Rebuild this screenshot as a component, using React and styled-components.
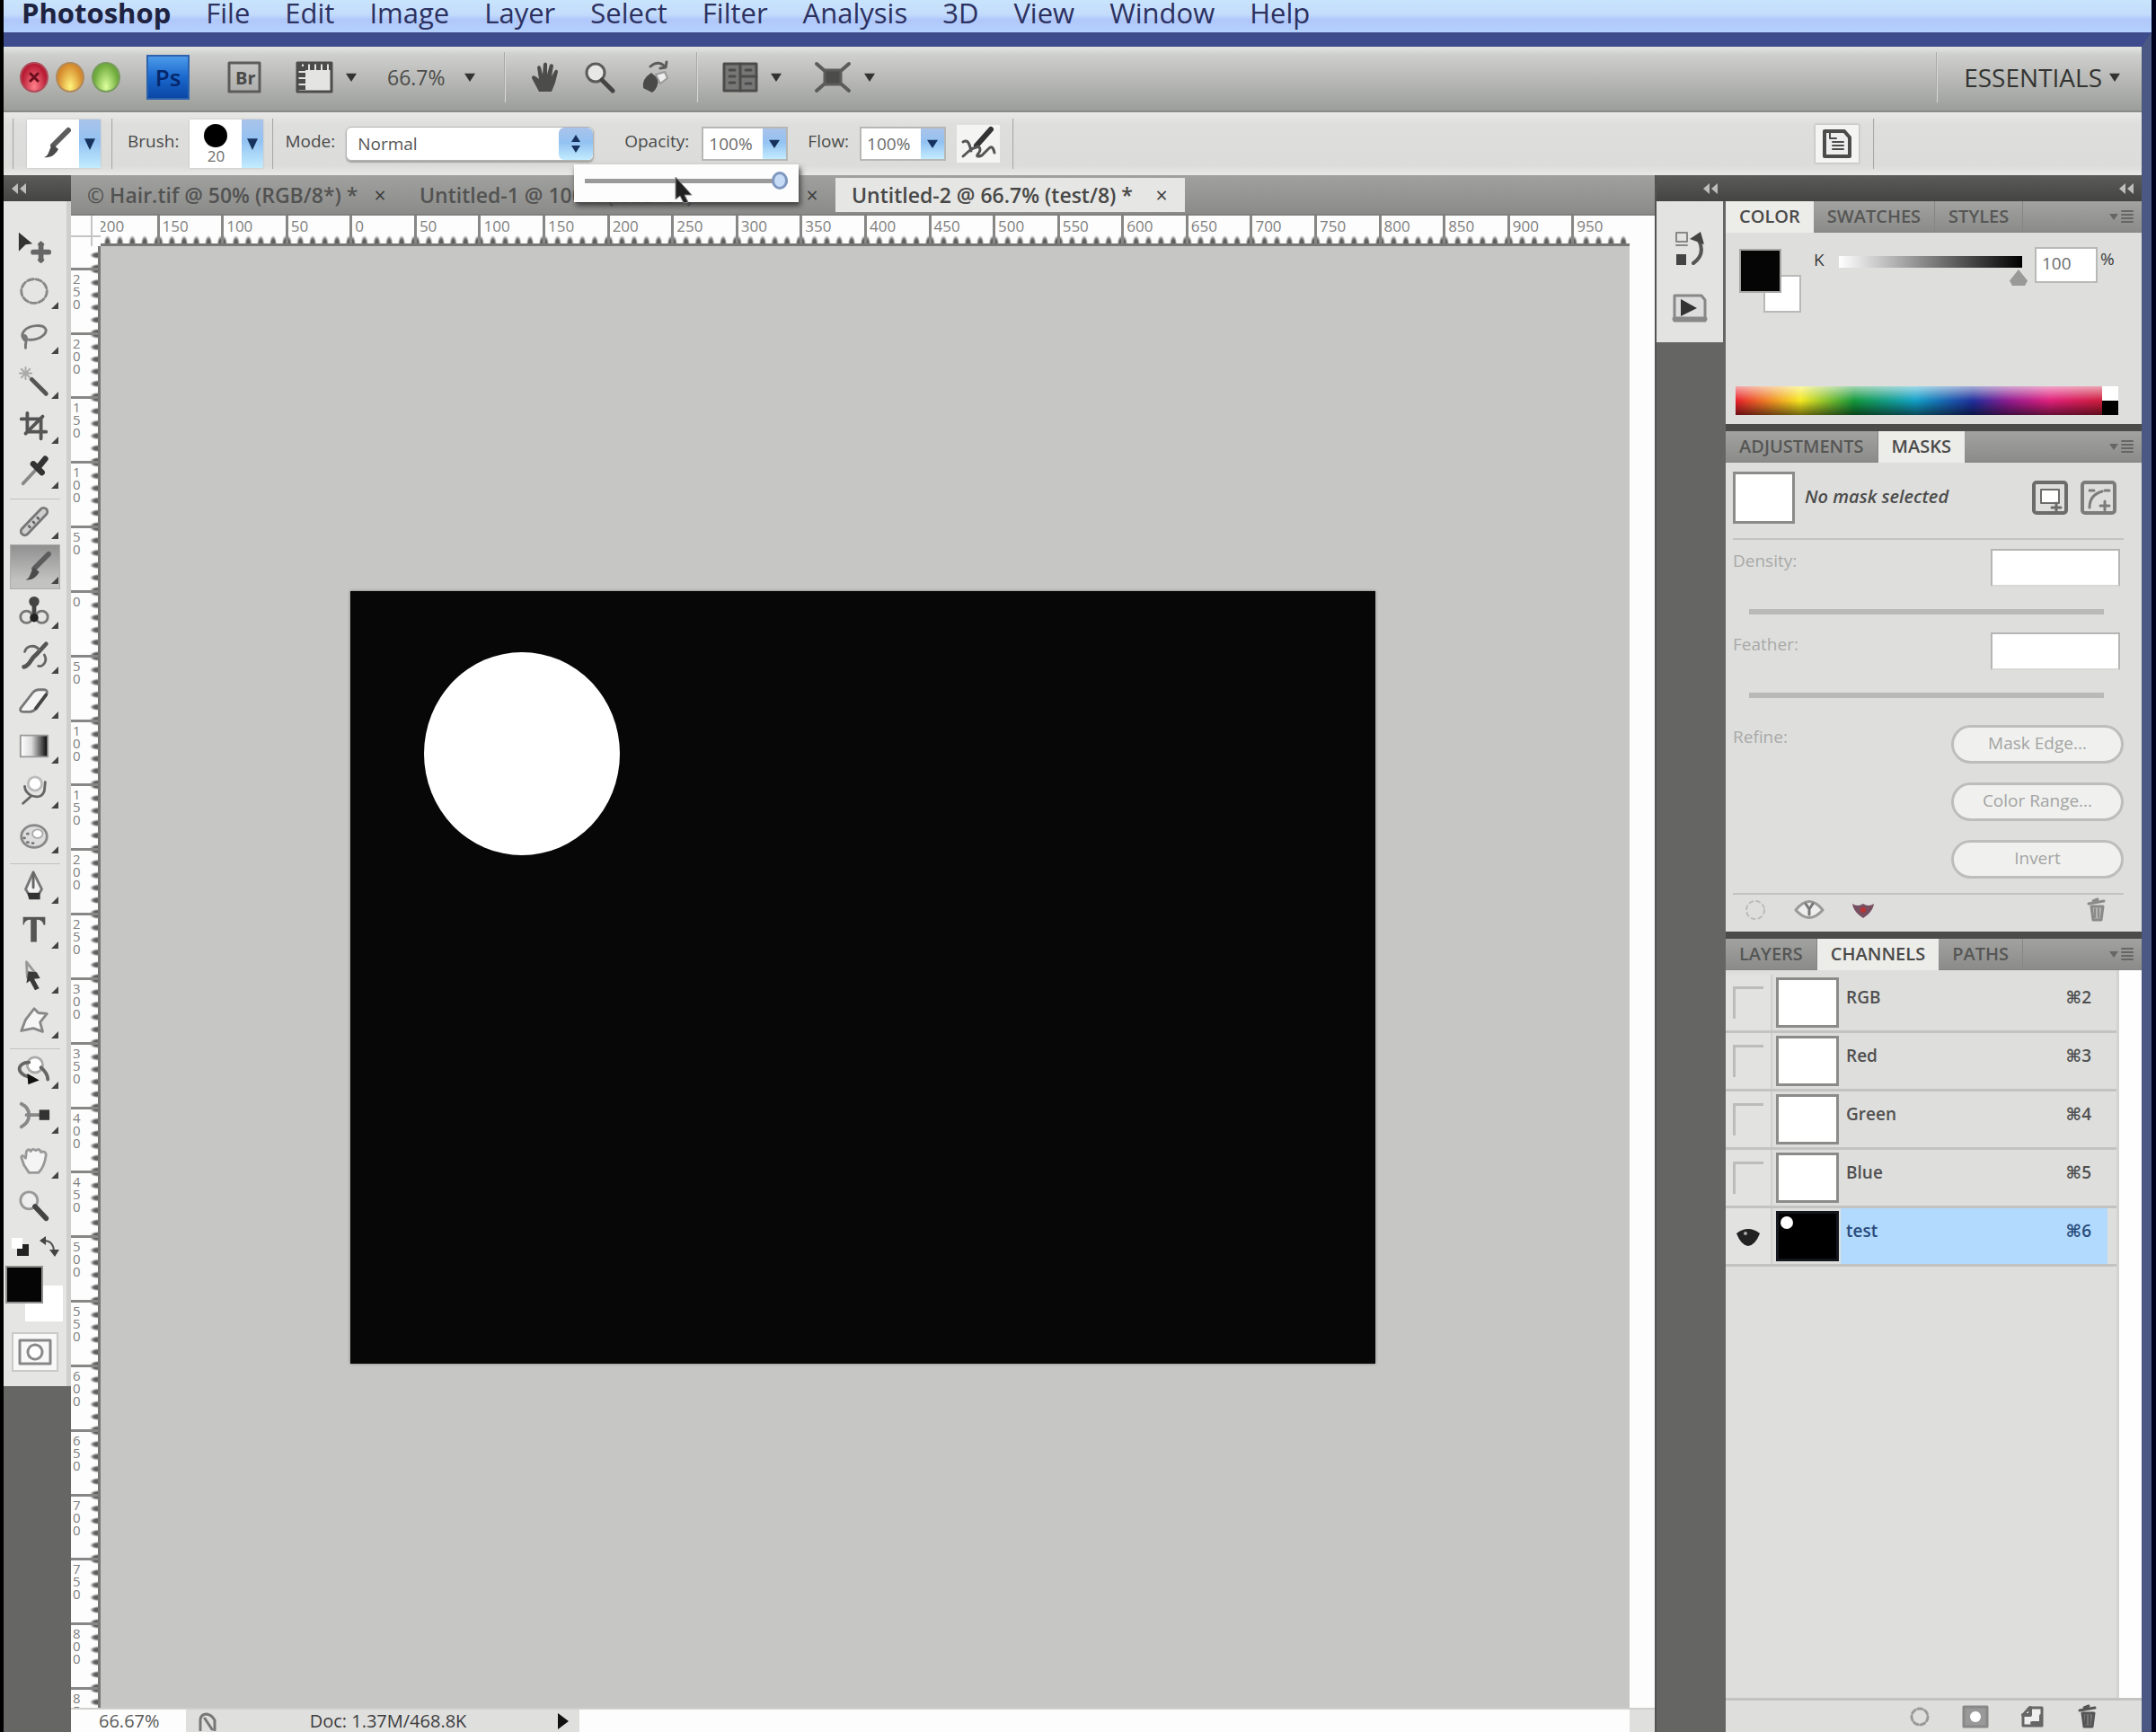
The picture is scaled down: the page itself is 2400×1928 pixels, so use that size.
import React from "react";
import styled, { createGlobalStyle, css } from "styled-components";

const GlobalStyle = createGlobalStyle`
  * { box-sizing: border-box; }
  html, body { margin: 0; background: #000; }
  body, button, input, select {
    font-family: "Open Sans", "Noto Sans", "DejaVu Sans", sans-serif;
    color: #3c3c3c;
  }
  button, input, select { border: 0; padding: 0; margin: 0; background: none; font-size: inherit; outline: none; }
  ul { list-style: none; margin: 0; padding: 0; }
`;

/* ---------- frame ---------- */
const Screen = styled.div`
  display: flex;
  flex-direction: column;
  height: 100vh;
  overflow: hidden;
  border-left: 4px solid #000;
  border-right: 5px solid #00001c;
`;
const MenuBar = styled.nav`
  display: flex;
  align-items: center;
  gap: 39px;
  flex: none;
  height: 36px;
  padding: 0 20px 8px;
  font-size: 31px;
  line-height: 28px;
  background: linear-gradient(#c8e4fc 0%, #c4dcfc 45%, #b0c8fa 60%, #b4d0fc 100%);
`;
const MenuItem = styled.button`
  color: #2c3160;
  line-height: 28px;
  font-weight: ${(p) => (p.$strong ? 700 : 500)};
  ${(p) => p.$strong && css`color: #1d2340;`}
`;
const AppWindow = styled.div`
  display: flex;
  flex-direction: column;
  flex: 1;
  min-height: 0;
  border-top: 16px solid #3e4c8e;
  border-right: 11px solid #4c5884;
`;

/* ---------- application bar ---------- */
const AppBar = styled.header`
  display: flex;
  align-items: center;
  flex: none;
  height: 73px;
  padding: 0 24px 4px 18px;
  border-bottom: 2px solid #8a8b88;
  background: linear-gradient(#e2e6e0 0%, #cfd0cd 12%, #b9bab7 50%, #9c9e9a 100%);
`;
const Lights = styled.div`
  display: flex;
  gap: 8px;
  margin-right: 29px;
`;
const Light = styled.button`
  width: 32px;
  height: 34px;
  border-radius: 50%;
  line-height: 30px;
  border: 2px solid ${(p) => p.$edge};
  background: radial-gradient(ellipse at 50% 85%, ${(p) => p.$glow} 0%, ${(p) => p.$tone} 70%);
`;
const PsLogo = styled.div`
  display: grid;
  place-items: center;
  width: 48px;
  height: 50px;
  margin-right: 42px;
  font-size: 26px;
  font-weight: 600;
  color: #06266b;
  border: 2px solid #2c62ae;
  background: linear-gradient(#4c9bea, #1a68cc 50%, #0a47a6);
`;
const BarButton = styled.button`
  display: flex;
  align-items: center;
  gap: 14px;
  margin-right: ${(p) => p.$after || 0}px;
`;
const ZoomSelect = styled.select`
  appearance: none;
  width: 86px;
  font-size: 23px;
  color: #4c4c4a;
`;
const Rule = styled.span`
  flex: none;
  width: 2px;
  height: 56px;
  margin: 0 ${(p) => p.$after || 0}px 0 ${(p) => p.$before || 0}px;
  background: #a9aaa8;
  border-right: 1px solid #d8d8d6;
`;
const Workspace = styled.button`
  display: flex;
  align-items: center;
  gap: 8px;
  font-size: 28px;
  color: #333432;
`;
const Spacer = styled.span`
  flex: 1;
`;

/* ---------- options bar ---------- */
const OptionsBar = styled.section`
  display: flex;
  align-items: center;
  flex: none;
  height: 70px;
  font-size: 19px;
  background: linear-gradient(#e8e8e7, #dededd 20%, #dcdddb 85%, #e8e8e6);
`;
const Preset = styled.button`
  display: flex;
  flex: none;
  width: 82px;
  height: 54px;
  background: #fff;
  box-shadow: 0 0 2px #b9bab8;
`;
const PresetFace = styled.span`
  display: flex;
  flex: 1;
  flex-direction: column;
  align-items: center;
  justify-content: center;
  font-size: 17px;
  line-height: 18px;
  color: #6d6d6b;
`;
const BlueCap = styled.span`
  display: flex;
  flex: none;
  align-items: center;
  justify-content: center;
  width: ${(p) => p.$w || 24}px;
  border-radius: ${(p) => p.$r || 0}px;
  background: linear-gradient(#a9c3ea, #93c2f2 45%, #c3ecff);
`;
const OptLabel = styled.label`
  margin: 0 ${(p) => p.$after || 12}px 6px ${(p) => p.$before || 16}px;
  color: #4a4a49;
`;
const ModeBox = styled.span`
  display: flex;
  width: 276px;
  height: 38px;
  border-radius: 6px;
  background: #fff;
  border: 1px solid #b3b4b2;
  box-shadow: 0 2px 2px #a2a3a1;
`;
const ModeSelect = styled.select`
  appearance: none;
  flex: 1;
  padding-left: 12px;
  color: #565656;
`;
const Combo = styled.span`
  position: relative;
  display: flex;
  width: 96px;
  height: 38px;
  background: #fff;
  border: 2px solid #b7b8b6;
`;
const ComboInput = styled.input`
  flex: 1;
  min-width: 0;
  padding-left: 6px;
  font-size: 19px;
  color: #6b6b6b;
`;
const ComboButton = styled.button`
  display: flex;
  flex: none;
  width: 26px;
`;
const Flyout = styled.div`
  position: absolute;
  z-index: 5;
  top: 40px;
  right: -14px;
  display: flex;
  align-items: center;
  width: 250px;
  height: 42px;
  padding: 0 12px 6px;
  background: #fdfdfd;
  box-shadow: 2px 4px 6px #3c3c3c;
`;
const FlyoutRange = styled.input`
  appearance: none;
  flex: 1;
  min-width: 0;
  height: 20px;
  background: linear-gradient(#9a9a9a, #9a9a9a) center / 100% 5px no-repeat;
  &::-webkit-slider-thumb {
    appearance: none;
    width: 18px;
    height: 20px;
    border-radius: 50%;
    border: 3px solid #7f97bf;
    background: #c6dcf6;
  }
`;
const Pointer = styled.svg`
  position: absolute;
  left: 110px;
  top: 12px;
  width: 24px;
  height: 32px;
`;
const IconButton = styled.button`
  display: grid;
  place-items: center;
  flex: none;
  width: 48px;
  height: 42px;
  margin-left: ${(p) => p.$before || 0}px;
  background: #f4f4f3;
  ${(p) => p.$framed && css`box-shadow: 0 0 2px 1px #bcbdbb;`}
`;

/* ---------- work area ---------- */
const Work = styled.main`
  display: flex;
  flex: 1;
  min-height: 0;
`;
const ToolColumn = styled.aside`
  flex: none;
  width: 75px;
  background: #666665;
`;
const DarkStrip = styled.div`
  display: flex;
  align-items: center;
  justify-content: ${(p) => (p.$left ? "flex-start" : "flex-end")};
  height: 29px;
  padding: 0 8px;
  flex: none;
  background: linear-gradient(#5b5c5a, #444543);
`;
const Tools = styled.div`
  display: flex;
  flex-direction: column;
  align-items: center;
  padding: 26px 0 16px;
  background: #e5e5e4;
  border-right: 5px solid #cfcfce;
`;
const ToolGroup = styled.div`
  width: 56px;
  & + & {
    margin-top: 5px;
    border-top: 1px solid #c2c2c1;
  }
`;
const ToolButton = styled.button`
  display: flex;
  align-items: center;
  justify-content: flex-start;
  width: 56px;
  height: 50px;
  padding-left: 8px;
  ${(p) => p.$on && css`
    background: linear-gradient(#8f8f8f, #c2c2c1 80%);
    box-shadow: inset 0 0 0 1px #adadac;
  `}
`;
const MiniRow = styled.div`
  display: flex;
  justify-content: space-between;
  width: 54px;
  height: 32px;
  padding-top: 8px;
`;
const ColorWell = styled.div`
  display: grid;
  grid-template-columns: 20px 18px 24px;
  grid-template-rows: 20px 18px 22px;
  margin: 11px 0 12px;
`;
const WellBack = styled.button`
  grid-area: 2 / 2 / 4 / 4;
  background: #fff;
  border: ${(p) => (p.$edge ? "2px solid #b9b9b8" : "0")};
`;
const WellFront = styled.button`
  grid-area: 1 / 1 / 3 / 3;
  z-index: 1;
  background: #050505;
  box-shadow: 0 0 0 2px ${(p) => p.$ring || "#8f8f8e"};
`;
const QuickMask = styled.button`
  display: grid;
  place-items: center;
  width: 52px;
  height: 44px;
  border: 2px solid #c9c9c8;
  background: #f8f8f8;
`;

const DocumentArea = styled.section`
  display: flex;
  flex-direction: column;
  flex: 1;
  min-width: 0;
`;
const TabBar = styled.div`
  display: flex;
  align-items: flex-end;
  flex: none;
  height: 45px;
  padding-bottom: 2px;
  background: linear-gradient(#a0a19f, #8b8c8a);
  border-bottom: 2px solid #7f807e;
`;
const DocTab = styled.div`
  display: flex;
  align-items: center;
  justify-content: space-between;
  width: ${(p) => p.$w}px;
  height: 38px;
  padding: 0 16px 0 18px;
  font-size: 23px;
  ${(p) => p.$on && css`background: #e6e6e4;`}
`;
const DocTitle = styled.button`
  font-weight: 600;
  white-space: nowrap;
  color: ${(p) => (p.$on ? "#484847" : "#525251")};
`;
const Close = styled.button`
  width: 20px;
  line-height: 24px;
`;
const TopRulerRow = styled.div`
  display: flex;
  flex: none;
  height: 34px;
  background: #fdfdfd;
`;
const Corner = styled.div`
  flex: none;
  width: 33px;
  background:
    linear-gradient(#c4c4c4, #c4c4c4) 22px 0 / 2px 100% no-repeat,
    linear-gradient(#c4c4c4, #c4c4c4) 0 22px / 100% 2px no-repeat;
`;
const HRuler = styled.div`
  flex: 1;
  min-width: 0;
  overflow: hidden;
  border-bottom: 3px solid #777776;
`;
const HScale = styled.div`
  display: flex;
  height: 100%;
  margin: 0 -7px 0 -9px;
`;
const HCell = styled.div`
  flex: 1;
  min-width: 0;
  padding-left: 3px;
  font-size: 17px;
  line-height: 23px;
  color: #7f7f7e;
  border-left: 3px solid #878786;
  background: radial-gradient(4px 9px at 50% 100%, #5f5f5e 50%, transparent 100%) -7px 100% / 20% 9px repeat-x;
`;
const ScrollGutter = styled.div`
  flex: none;
  width: 28px;
  background: #fdfdfd;
`;
const CanvasRow = styled.div`
  display: flex;
  flex: 1;
  min-height: 0;
`;
const VRuler = styled.div`
  display: flex;
  flex: none;
  width: 33px;
  overflow: hidden;
  background: #fdfdfd;
  border-right: 3px solid #777776;
`;
const VScale = styled.div`
  display: flex;
  flex: 1;
  flex-direction: column;
  margin: -48px 0 -49px;
`;
const VCell = styled.div`
  flex: 1;
  min-height: 0;
  padding: 2px 18px 0 2px;
  font-size: 15px;
  line-height: 14px;
  word-break: break-all;
  color: #7f7f7e;
  border-top: 3px solid #878786;
  background: radial-gradient(9px 4px at 100% 50%, #5f5f5e 50%, transparent 100%) 100% -7px / 9px 20% repeat-y;
`;
const Canvas = styled.div`
  display: flex;
  align-items: center;
  justify-content: center;
  flex: 1;
  min-width: 0;
  padding-right: 6px;
  background: #c6c6c5;
`;
const Artwork = styled.svg`
  width: 1141px;
  max-width: 90%;
  height: auto;
  box-shadow: 0 0 3px #777;
`;
const StatusBar = styled.footer`
  display: flex;
  align-items: center;
  flex: none;
  height: 27px;
  font-size: 20px;
  line-height: 24px;
  background: #fdfdfd;
  border-top: 2px solid #cfcfce;
`;
const StatusZoom = styled.input`
  width: 128px;
  height: 24px;
  padding-left: 31px;
  color: #5a5a59;
`;
const StatusInfo = styled.div`
  display: flex;
  align-items: center;
  justify-content: space-between;
  width: 438px;
  height: 25px;
  padding: 0 12px;
  background: #dfdfde;
`;
const StatusCorner = styled.span`
  width: 28px;
  height: 25px;
  margin-left: auto;
  background: #dfdfde;
`;

/* ---------- panels ---------- */
const Dock = styled.aside`
  display: flex;
  flex-direction: column;
  flex: none;
  width: 79px;
  background: #656663;
  border-left: 2px solid #535452;
`;
const DockIcons = styled.div`
  display: flex;
  flex-direction: column;
  align-items: center;
  gap: 26px;
  height: 157px;
  margin-right: 3px;
  padding-top: 32px;
  background: #e3e3e1;
`;
const PlainButton = styled.button`
  display: flex;
`;
const Panels = styled.aside`
  display: flex;
  flex-direction: column;
  flex: none;
  width: 463px;
`;
const Panel = styled.section`
  display: flex;
  flex-direction: column;
  flex: ${(p) => (p.$grow ? "1" : "none")};
  min-height: 0;
  background: #dedfdd;
  & + & { border-top: 8px solid #4b4c4a; }
`;
const PanelTabs = styled.div`
  display: flex;
  flex: none;
  height: 35px;
  padding-right: 8px;
  background: linear-gradient(#a2a3a0, #8b8c8a);
  border-bottom: 1px solid #858684;
`;
const PanelTab = styled.button`
  height: 35px;
  padding: 0 15px 2px;
  font-size: 20px;
  font-weight: 600;
  color: #565655;
  border-right: 1px solid #868785;
  ${(p) => p.$on && css`
    color: #4a4a49;
    background: #ecece9;
    border-right: 0;
  `}
`;
const PanelMenu = styled.button`
  display: flex;
  align-items: center;
  margin-left: auto;
`;
const ColorBody = styled.div`
  display: flex;
  flex-direction: column;
  justify-content: space-between;
  height: 213px;
  padding: 16px 26px 10px 11px;
`;
const ColorRow = styled.div`
  display: flex;
  align-items: flex-start;
  font-size: 19px;
`;
const PanelWell = styled(ColorWell)`
  margin: 4px 14px 0 6px;
  grid-template-columns: 25px 18px 24px;
  grid-template-rows: 27px 18px 24px;
`;
const KLabel = styled.label`
  width: 28px;
  line-height: 28px;
`;
const KRange = styled.input`
  appearance: none;
  width: 210px;
  height: 46px;
  background: linear-gradient(90deg, #fff, #000) 0 10px / 204px 13px no-repeat;
  &::-webkit-slider-thumb {
    appearance: none;
    width: 20px;
    height: 18px;
    margin-top: 22px;
    background: #999a98;
    clip-path: polygon(50% 0, 100% 70%, 85% 100%, 15% 100%, 0 70%);
  }
`;
const KInput = styled.input`
  width: 70px;
  height: 40px;
  margin: 0 3px 0 8px;
  padding: 0 0 4px 6px;
  color: #6b6b6b;
  background: #fff;
  border: 2px solid #b9bab8;
`;
const Spectrum = styled.div`
  display: flex;
  height: 32px;
  background:
    linear-gradient(rgba(255,255,255,.6), rgba(255,255,255,0) 50%, rgba(0,0,0,.55)),
    linear-gradient(90deg, #e8202c, #f6e820 17%, #14983c 31%, #12a0c8 47%, #1f2f9c 62%, #8c1c90 71%, #e0207c 82%, #c81c28);
`;
const SpectrumEnds = styled.span`
  width: 18px;
  margin-left: auto;
  background: linear-gradient(#fff 50%, #000 50%);
`;
const MaskBody = styled.div`
  height: 522px;
  padding: 10px 20px 0 8px;
  font-size: 19px;
  color: #a9a9a8;
`;
const MaskHead = styled.div`
  display: flex;
  align-items: center;
  height: 76px;
  padding: 0 8px 16px 0;
  border-bottom: 2px solid #c3c4c2;
`;
const MaskThumb = styled.span`
  width: 69px;
  height: 58px;
  margin-right: 11px;
  background: #fff;
  border: 3px solid #8b8c8a;
`;
const MaskNote = styled.em`
  flex: 1;
  padding-bottom: 4px;
  font-size: 20px;
  font-weight: 600;
  color: #4c4c4b;
`;
const MaskTools = styled.div`
  display: flex;
  gap: 14px;
`;
const MaskField = styled.div`
  display: grid;
  grid-template-columns: 1fr 144px;
  align-items: start;
  height: 93px;
  padding: 10px 4px 0 0;
`;
const MaskInput = styled.input`
  height: 42px;
  background: #fff;
  border: 2px solid #b5b6b4;
  border-bottom-color: #d8d8d7;
`;
const MaskRange = styled.input`
  appearance: none;
  grid-column: 1 / 3;
  height: 6px;
  margin: 14px 18px 0 18px;
  background: #b9bab8;
  &::-webkit-slider-thumb { appearance: none; width: 1px; height: 1px; }
`;
const RefineRow = styled.div`
  display: flex;
  justify-content: space-between;
  height: 209px;
  padding-top: 20px;
  border-bottom: 2px solid #c3c4c2;
`;
const RefineButtons = styled.div`
  display: flex;
  flex-direction: column;
  gap: 21px;
`;
const Pill = styled.button`
  width: 192px;
  height: 43px;
  padding-bottom: 3px;
  font-size: 19px;
  color: #a3a3a2;
  border: 3px solid #bdbebc;
  border-radius: 22px;
  background: #f0f1ef;
`;
const PanelFooter = styled.div`
  display: flex;
  align-items: center;
  gap: ${(p) => p.$gap}px;
  height: 34px;
  padding: 0 ${(p) => p.$right}px 0 12px;
`;
const ChannelArea = styled.div`
  display: flex;
  flex: 1;
  min-height: 0;
`;
const ChannelList = styled.ul`
  flex: 1;
  padding-top: 5px;
`;
const ChannelScroll = styled.div`
  width: 28px;
  background: #fefefe;
  border-left: 3px solid #d3d4d1;
`;
const ChannelRow = styled.li`
  display: flex;
  align-items: center;
  height: 65px;
  font-size: 19px;
  border-bottom: 3px solid #c3c4c2;
`;
const EyeCell = styled.label`
  display: grid;
  place-items: center;
  width: 52px;
  height: 62px;
  border-right: 2px solid #d0d1cf;
  background: #e2e2e0;
`;
const EyeBox = styled.input`
  grid-area: 1 / 1;
  appearance: none;
  width: 34px;
  height: 36px;
  border-top: 3px solid ${(p) => (p.defaultChecked ? "transparent" : "#bcbdbb")};
  border-left: 3px solid ${(p) => (p.defaultChecked ? "transparent" : "#bcbdbb")};
`;
const EyeIcon = styled.svg`
  grid-area: 1 / 1;
  width: 28px;
  height: 24px;
`;
const ChannelThumb = styled.svg`
  flex: none;
  width: 70px;
  height: 56px;
  margin: 0 2px 0 4px;
  border: 3px solid ${(p) => (p.$dark ? "#14161e" : "#8b8c8a")};
  background: ${(p) => (p.$dark ? "#000" : "#fff")};
`;
const ChannelName = styled.button`
  display: flex;
  justify-content: space-between;
  align-items: center;
  flex: 1;
  height: 62px;
  margin-right: 10px;
  padding: 0 18px 12px 6px;
  font-weight: 600;
  color: ${(p) => (p.$on ? "#2a4c7c" : "#505050")};
  background: ${(p) => (p.$on ? "#b2dafe" : "transparent")};
`;
const ChannelFooter = styled(PanelFooter)`
  justify-content: flex-end;
  flex: none;
  height: 38px;
  border-top: 3px solid #c3c4c2;
`;

/* ---------- glyphs ---------- */
const Svg = styled.svg`
  flex: none;
  width: ${(p) => p.$w || 38}px;
  height: ${(p) => p.$h || p.$w || 38}px;
  fill: none;
  stroke: ${(p) => p.$c || "#555"};
  stroke-width: 3;
  stroke-linecap: round;
  stroke-linejoin: round;
`;
const Caret = ({ w = 12, h = 10, color = "#333" }) => (
  <Svg $w={w} $h={h} viewBox="0 0 12 12" preserveAspectRatio="none" aria-hidden="true">
    <path d="M0 1h12L6 12z" fill={color} stroke="none" />
  </Svg>
);
const Chevrons = () => (
  <Svg $w={18} $h={12} viewBox="0 0 18 12" aria-hidden="true">
    <path d="M8 0v12L1 6zM17 0v12l-7-6z" fill="#bdbebc" stroke="none" />
  </Svg>
);
const Fill = ({ d, c = "#444" }) => <path d={d} fill={c} stroke="none" />;

const glyphs = {
  move: <><Fill d="M2 3l16 13-8 1-8 8z" c="#333" /><path d="M28 17v18M19 26h18" stroke="#666" strokeWidth="6" /><path d="M25 17l3-3 3 3M25 35l3 3 3-3" stroke="#666" strokeWidth="2" /></>,
  ellipse: <ellipse cx="20" cy="19" rx="15" ry="14" stroke="#888" strokeDasharray="7 3" />,
  lasso: <path d="M9 24c-7-7 0-16 13-17 11-1 15 5 9 11-5 5-16 7-21 4-4-2-2-5 0-3 3 3-1 7 0 14" stroke="#777" />,
  wand: <><path d="M17 17l17 17" stroke="#555" strokeWidth="5" /><path d="M10 3v14M3 10h14M5 5l10 10M15 5L5 15" stroke="#aaa" strokeWidth="2" /></>,
  crop: <path d="M12 4v22h22M5 11h23v23M10 28L30 8" stroke="#555" strokeWidth="4" />,
  dropper: <><path d="M7 34l14-15" stroke="#888" strokeWidth="4" /><path d="M19 11l10 10M24 16l9-11" stroke="#333" strokeWidth="7" /></>,
  heal: <><path d="M9 31L31 8" stroke="#777" strokeWidth="12" /><path d="M9 31L31 8" stroke="#cfcfcf" strokeWidth="6" /><path d="M14 25l1 1M19 20l1 1M24 15l1 1" stroke="#666" /></>,
  brush: <><path d="M20 22L37 5" stroke="#5c5c5c" strokeWidth="6" /><Fill d="M10 35c6-1 5-10 10-14l6 5c-4 7-9 10-16 9z" c="#4b4b4b" /></>,
  stamp: <><circle cx="20" cy="8" r="6" fill="#444" stroke="none" /><path d="M20 12v10" stroke="#444" strokeWidth="5" /><circle cx="11" cy="26" r="7" stroke="#777" /><circle cx="29" cy="26" r="7" stroke="#777" /><circle cx="20" cy="27" r="5" fill="#222" stroke="none" /></>,
  history: <><path d="M8 32c7-1 8-10 14-14L34 5" stroke="#555" strokeWidth="5" /><path d="M9 14c2-7 12-9 17-2M32 18c4 7-1 14-7 13" stroke="#666" /></>,
  eraser: <><path d="M4 28l14-18q3-4 8-4h6q5 1 2 6L22 28q-3 4-7 4H8q-5 0-4-4z" fill="#f4f4f4" stroke="#777" /><path d="M22 28l12-16" stroke="#444" strokeWidth="4" /></>,
  gradient: <><defs><linearGradient id="toolGradient"><stop offset="0" stopColor="#fff" /><stop offset=".4" stopColor="#ddd" /><stop offset="1" stopColor="#000" /></linearGradient></defs><rect x="4" y="7" width="32" height="25" fill="url(#toolGradient)" stroke="#999" strokeWidth="2" /></>,
  smudge: <><circle cx="21" cy="11" r="8" fill="#fff" stroke="#bbb" /><path d="M7 34l10-9q-8-4-8-11M17 25q12 4 15-6l1-10" stroke="#666" /></>,
  sponge: <><ellipse cx="20" cy="20" rx="15" ry="13" fill="#ddd" stroke="#888" /><ellipse cx="24" cy="17" rx="6" ry="5" fill="#fff" stroke="#aaa" strokeWidth="2" /><path d="M8 22h1M12 27h1M18 28h1M12 17h1" stroke="#777" /></>,
  pen: <><path d="M19 3l-9 20 5 8h9l5-8z" fill="#f2f2f2" stroke="#777" /><path d="M19 4v17" stroke="#666" /><Fill d="M12 27h15v8H14z" c="#333" /></>,
  type: <Fill d="M7 3h26v9h-2q-1-6-8-6v26h-7V6q-7 0-8 6H7z" c="#555" />,
  path: <><path d="M11 3l12 15M11 3l1 18" stroke="#999" /><Fill d="M13 14l10 1 4 7-7 1 6 11-5 2-6-11-4 3z" c="#3a3a3a" /></>,
  shape: <path d="M20 5l5 5 10 1-8 10 3 11-11-4-14 3 5-13z" fill="#f6f6f6" stroke="#888" />,
  rotate3d: <><circle cx="21" cy="12" r="9" fill="#fff" stroke="#aaa" /><path d="M14 9C4 9-2 17 8 24l10 4M28 15q8 7 8 14" stroke="#666" strokeWidth="4" /><Fill d="M12 22l14 8-13 5z" c="#111" /></>,
  orbit3d: <><path d="M5 5c12 6 12 20 0 27M11 18h20" stroke="#888" strokeWidth="4" /><rect x="26" y="12" width="12" height="12" fill="#333" stroke="none" /></>,
  hand: <path d="M8 24L5 15q1-4 5 1l1-8q3-4 5 0 2-4 6-1 4-3 6 2 5-2 6 3-2 15-9 21H14z" fill="#f4f4f4" stroke="#999" />,
  zoom: <><circle cx="14" cy="13" r="10" fill="#eee" stroke="#999" /><path d="M21 20l13 14" stroke="#444" strokeWidth="6" /></>,
};

const Tool = ({ name, label, on, plain }) => (
  <ToolButton aria-label={label} aria-pressed={!!on} $on={on}>
    <Svg $w={38} viewBox="0 0 40 40">{glyphs[name]}</Svg>
    {!plain && (
      <Svg $w={9} $h={40} viewBox="0 0 9 40" aria-hidden="true">
        <Fill d="M0 39h8v-8z" />
      </Svg>
    )}
  </ToolButton>
);

const toolGroups = [
  [["move", "Move", true], ["ellipse", "Elliptical marquee"], ["lasso", "Lasso"], ["wand", "Quick selection"], ["crop", "Crop"], ["dropper", "Eyedropper"]],
  [["heal", "Healing brush"], ["brush", "Brush tool"], ["stamp", "Clone stamp"], ["history", "History brush"], ["eraser", "Eraser"], ["gradient", "Gradient"], ["smudge", "Smudge"], ["sponge", "Sponge"]],
  [["pen", "Pen"], ["type", "Type"], ["path", "Path selection"], ["shape", "Custom shape"]],
  [["rotate3d", "3D rotate"], ["orbit3d", "3D orbit"], ["hand", "Hand"], ["zoom", "Zoom", true]],
];

const menus = ["File", "Edit", "Image", "Layer", "Select", "Filter", "Analysis", "3D", "View", "Window", "Help"];
const hMarks = Array.from({ length: 24 }, (_, i) => Math.abs(i - 4) * 50);
const vMarks = Array.from({ length: 24 }, (_, i) => Math.abs(i - 6) * 50);
const channels = [["RGB", "⌘2"], ["Red", "⌘3"], ["Green", "⌘4"], ["Blue", "⌘5"], ["test", "⌘6"]];

const TabStrip = ({ names, active }) => (
  <PanelTabs role="tablist">
    {names.map((n) => (
      <PanelTab key={n} role="tab" aria-selected={n === active} $on={n === active}>{n}</PanelTab>
    ))}
    <PanelMenu aria-label="Panel menu">
      <Svg $w={28} $h={16} viewBox="0 0 28 16" $c="#666765">
        <path d="M0 5h10l-5 7z" fill="#666765" stroke="none" />
        <path d="M14 2h12M14 6h12M14 10h12M14 14h12" strokeWidth="2" />
      </Svg>
    </PanelMenu>
  </PanelTabs>
);

const Trash = ({ faded }) => (
  <Svg $w={28} $h={28} viewBox="0 0 28 28" $c={faded ? "#8a8a89" : "#555"}>
    <path d="M5 7l17-3M10 4l5-2" />
    <path d="M8 10h13l-2 15h-9z" fill={faded ? "#b5b5b4" : "#777"} />
    <path d="M12 13v9M16 13v9" strokeWidth="2" />
  </Svg>
);

export default function App() {
  return (
    <>
      <GlobalStyle />
      <Screen>
        <MenuBar aria-label="Menu bar">
          <MenuItem $strong>Photoshop</MenuItem>
          {menus.map((m) => <MenuItem key={m}>{m}</MenuItem>)}
        </MenuBar>
        <AppWindow>
          <AppBar>
            <Lights>
              <Light aria-label="Close" $edge="#b04a58" $tone="#b81c34" $glow="#ff7f8a">
                <Svg $w={12} viewBox="0 0 12 12" $c="#6c0c1c"><path d="M2 2l8 8M10 2l-8 8" /></Svg>
              </Light>
              <Light aria-label="Minimize" $edge="#b08a5c" $tone="#d68a2c" $glow="#fff47c" />
              <Light aria-label="Zoom window" $edge="#789a5c" $tone="#6eaa3c" $glow="#dcff9c" />
            </Lights>
            <PsLogo>Ps</PsLogo>
            <BarButton aria-label="Launch Bridge" $after={38}>
              <Svg $w={38} $h={36} viewBox="0 0 38 36" $c="#5c5c5b">
                <rect x="2" y="2" width="34" height="32" />
                <text x="9" y="26" fontSize="20" fontWeight="700" fill="#4a4a49" stroke="none">Br</text>
              </Svg>
            </BarButton>
            <BarButton aria-label="View extras" $after={34}>
              <Svg $w={42} $h={36} viewBox="0 0 42 36" $c="#4c4c4b">
                <rect x="2" y="2" width="38" height="32" fill="#e4e4e3" />
                <path d="M2 6h38M7 6v28" strokeWidth="8" strokeLinecap="butt" strokeDasharray="5 2" />
              </Svg>
              <Caret />
            </BarButton>
            <ZoomSelect aria-label="Zoom level" defaultValue="66.7%">
              <option>66.7%</option>
            </ZoomSelect>
            <Caret />
            <Rule $before={32} $after={27} />
            <BarButton aria-label="Hand tool" $after={26}>
              <Svg $w={34} $h={36} viewBox="0 0 34 36">
                <Fill d="M10 34L2 19q0-4 4-2l4 3L8 7q2-4 4 0l2 8 1-12q2-3 4 0v12l3-11q3-2 4 1l-2 12 4-7q3-1 3 2l-3 12-4 10z" c="#4c4c4b" />
              </Svg>
            </BarButton>
            <BarButton aria-label="Zoom tool" $after={26}>
              <Svg $w={36} $h={36} viewBox="0 0 36 36">
                <circle cx="13" cy="13" r="10" fill="#e8e8e7" stroke="#5c5c5b" />
                <path d="M20 21l12 12" stroke="#444" strokeWidth="5" />
              </Svg>
            </BarButton>
            <BarButton aria-label="Rotate view" $after={27}>
              <Svg $w={36} $h={40} viewBox="0 0 36 40">
                <Fill d="M4 32q-2-10 9-17l7 6q2 10-6 16z" c="#4a4a49" />
                <path d="M18 17l10-3 3 7-8 6z" fill="#eee" stroke="#999" strokeWidth="2" />
                <path d="M12 8q9-8 17 1l-6 1m6-1l1-6" stroke="#5c5c5b" />
              </Svg>
            </BarButton>
            <Rule $after={27} />
            <BarButton aria-label="Arrange documents" $after={36}>
              <Svg $w={40} $h={34} viewBox="0 0 40 34" $c="#4c4c4b">
                <rect x="2" y="2" width="36" height="30" fill="#777" />
                <path d="M20 2v30M20 16h18M8 9h6M8 16h6M8 23h6M26 9h6M26 24h6" />
              </Svg>
              <Caret />
            </BarButton>
            <BarButton aria-label="Screen mode">
              <Svg $w={42} $h={36} viewBox="0 0 42 36" $c="#5c5c5b">
                <rect x="12" y="10" width="18" height="16" fill="#4c4c4b" />
                <path d="M3 3l8 7M39 3l-8 7M3 33l8-7M39 33l-8-7" strokeWidth="4" />
              </Svg>
              <Caret />
            </BarButton>
            <Spacer />
            <Rule $after={29} />
            <Workspace>ESSENTIALS <Caret /></Workspace>
          </AppBar>

          <OptionsBar aria-label="Tool options">
            <Rule $before={10} $after={14} />
            <Preset aria-label="Tool preset">
              <PresetFace>
                <Svg $w={40} viewBox="0 0 40 40">{glyphs.brush}</Svg>
              </PresetFace>
              <BlueCap><Caret h={14} color="#16325c" /></BlueCap>
            </Preset>
            <Rule $before={12} />
            <OptLabel htmlFor="brush-size">Brush:</OptLabel>
            <Preset id="brush-size">
              <PresetFace>
                <Svg $w={28} $h={28} viewBox="0 0 28 28">
                  <circle cx="14" cy="14" r="13" fill="#000" stroke="none" />
                </Svg>
                20
              </PresetFace>
              <BlueCap><Caret h={14} color="#16325c" /></BlueCap>
            </Preset>
            <Rule $before={10} />
            <OptLabel htmlFor="mode" $before={12}>Mode:</OptLabel>
            <ModeBox>
              <ModeSelect id="mode" defaultValue="Normal"><option>Normal</option></ModeSelect>
              <BlueCap $w={38} $r={6}>
                <Svg $w={12} $h={22} viewBox="0 0 12 22">
                  <Fill d="M1 9l5-8 5 8zM1 13h10l-5 8z" c="#16325c" />
                </Svg>
              </BlueCap>
            </ModeBox>
            <OptLabel htmlFor="opacity" $before={34} $after={14}>Opacity:</OptLabel>
            <Combo>
              <ComboInput id="opacity" defaultValue="100%" />
              <ComboButton aria-label="Opacity slider">
                <BlueCap $w={26}><Caret color="#16325c" /></BlueCap>
              </ComboButton>
              <Flyout>
                <FlyoutRange type="range" aria-label="Opacity" min="0" max="100" defaultValue="100" />
                <Pointer viewBox="0 0 24 32" aria-hidden="true">
                  <path d="M3 2l18 20h-8l4 8-5 1-4-8-5 4z" fill="#222" stroke="#888" />
                </Pointer>
              </Flyout>
            </Combo>
            <OptLabel htmlFor="flow" $before={22}>Flow:</OptLabel>
            <Combo>
              <ComboInput id="flow" defaultValue="100%" />
              <ComboButton aria-label="Flow slider">
                <BlueCap $w={26}><Caret color="#16325c" /></BlueCap>
              </ComboButton>
            </Combo>
            <IconButton aria-label="Airbrush" $before={12}>
              <Svg $w={44} $h={40} viewBox="0 0 44 40">
                <path d="M20 22L36 4" stroke="#333" strokeWidth="6" />
                <path d="M5 34l9-8 8-3q4 3 0 8t4 2l8-8q4-4 6 5M5 18q5-3 7 3t2 7" stroke="#555" />
              </Svg>
            </IconButton>
            <Rule $before={14} />
            <Spacer />
            <IconButton aria-label="Brushes panel" $framed>
              <Svg $w={34} $h={34} viewBox="0 0 34 34" $c="#4c4c4b">
                <path d="M3 3h22l6 7v21H3z" fill="#eee" strokeWidth="4" />
                <path d="M9 3v8h7M12 15h12M12 19h12M12 23h12" strokeWidth="2" />
              </Svg>
            </IconButton>
            <Rule $before={16} $after={297} />
          </OptionsBar>

          <Work>
            <ToolColumn>
              <DarkStrip $left><Chevrons /></DarkStrip>
              <Tools>
                {toolGroups.map((group, i) => (
                  <ToolGroup key={i}>
                    {group.map(([name, label, plain]) => (
                      <Tool key={name} name={name} label={label} plain={plain} on={name === "brush"} />
                    ))}
                  </ToolGroup>
                ))}
                <MiniRow>
                  <Svg $w={22} $h={24} viewBox="0 0 22 24">
                    <rect x="7" y="9" width="13" height="13" fill="#222" stroke="none" />
                    <rect x="1" y="2" width="12" height="12" fill="#fff" stroke="none" />
                  </Svg>
                  <Svg $w={22} $h={24} viewBox="0 0 22 24">
                    <path d="M5 5q10 0 11 11" strokeWidth="2" />
                    <Fill d="M0 5l7-5v10zM11 15h11l-5 8z" />
                  </Svg>
                </MiniRow>
                <ColorWell>
                  <WellFront aria-label="Foreground color" />
                  <WellBack aria-label="Background color" />
                </ColorWell>
                <QuickMask aria-label="Quick mask">
                  <Svg $w={38} $h={30} viewBox="0 0 38 30" $c="#888">
                    <rect x="2" y="2" width="34" height="26" />
                    <circle cx="19" cy="15" r="8" fill="#fff" strokeDasharray="4 2" />
                  </Svg>
                </QuickMask>
              </Tools>
            </ToolColumn>

            <DocumentArea>
              <TabBar>
                <DocTab $w={370}><DocTitle>© Hair.tif @ 50% (RGB/8*) *</DocTitle><Close aria-label="Close Hair.tif">×</Close></DocTab>
                <DocTab $w={481}><DocTitle>Untitled-1 @ 100% (RGB/8*) *</DocTitle><Close aria-label="Close Untitled-1">×</Close></DocTab>
                <DocTab $w={389} $on><DocTitle $on>Untitled-2 @ 66.7% (test/8) *</DocTitle><Close aria-label="Close Untitled-2">×</Close></DocTab>
              </TabBar>
              <TopRulerRow>
                <Corner />
                <HRuler>
                  <HScale>{hMarks.map((m, i) => <HCell key={i}>{m}</HCell>)}</HScale>
                </HRuler>
                <ScrollGutter />
              </TopRulerRow>
              <CanvasRow>
                <VRuler>
                  <VScale>
                    {vMarks.map((m, i) => <VCell key={i}>{m}</VCell>)}
                  </VScale>
                </VRuler>
                <Canvas>
                  <Artwork viewBox="0 0 1141 860" role="img" aria-label="Canvas">
                    <rect width="1141" height="860" fill="#060706" />
                    <ellipse cx="191" cy="181" rx="109" ry="113" fill="#fff" />
                  </Artwork>
                </Canvas>
                <ScrollGutter />
              </CanvasRow>
              <StatusBar>
                <StatusZoom aria-label="Zoom" defaultValue="66.67%" />
                <StatusInfo>
                  <Svg $w={24} $h={22} viewBox="0 0 24 22" $c="#777">
                    <path d="M4 21V9q1-6 7-6 6 1 9 7v11M9 8l8 12" />
                  </Svg>
                  <span>Doc: 1.37M/468.8K</span>
                  <Svg $w={12} $h={18} viewBox="0 0 12 18"><Fill d="M0 0l12 9-12 9z" c="#111" /></Svg>
                </StatusInfo>
                <StatusCorner />
              </StatusBar>
            </DocumentArea>

            <Dock>
              <DarkStrip><Chevrons /></DarkStrip>
              <DockIcons>
                <PlainButton aria-label="History">
                  <Svg $w={40} $h={44} viewBox="0 0 40 44">
                    <path d="M5 3h12v10H5zM5 17h12" stroke="#888" strokeWidth="2" />
                    <rect x="5" y="27" width="11" height="12" fill="#444" stroke="none" />
                    <path d="M24 37q14-10 6-26" stroke="#555" strokeWidth="4" />
                    <Fill d="M20 10L32 2l4 14z" />
                  </Svg>
                </PlainButton>
                <PlainButton aria-label="Actions">
                  <Svg $w={40} $h={34} viewBox="0 0 40 34" $c="#888">
                    <path d="M3 3h30l4 5v23H3z" fill="#ddd" />
                    <Fill d="M10 7l18 10-18 9z" c="#333" />
                    <path d="M3 29h34" strokeWidth="5" />
                  </Svg>
                </PlainButton>
              </DockIcons>
            </Dock>

            <Panels>
              <DarkStrip><Chevrons /></DarkStrip>
              <Panel>
                <TabStrip names={["COLOR", "SWATCHES", "STYLES"]} active="COLOR" />
                <ColorBody>
                  <ColorRow>
                    <PanelWell>
                      <WellFront aria-label="Foreground" $ring="#a6a6a5" />
                      <WellBack aria-label="Background" $edge />
                    </PanelWell>
                    <KLabel htmlFor="k">K</KLabel>
                    <KRange id="k" type="range" min="0" max="100" defaultValue="100" />
                    <KInput aria-label="K percent" defaultValue="100" />
                    %
                  </ColorRow>
                  <Spectrum><SpectrumEnds /></Spectrum>
                </ColorBody>
              </Panel>

              <Panel>
                <TabStrip names={["ADJUSTMENTS", "MASKS"]} active="MASKS" />
                <MaskBody>
                  <MaskHead>
                    <MaskThumb />
                    <MaskNote>No mask selected</MaskNote>
                    <MaskTools>
                      <PlainButton aria-label="Add pixel mask">
                        <Svg $w={40} $h={38} viewBox="0 0 40 38" $c="#6c6c6b">
                          <rect x="2" y="2" width="36" height="34" rx="3" strokeWidth="4" />
                          <rect x="10" y="10" width="20" height="15" fill="#fff" strokeWidth="2" />
                          <path d="M22 30h10M27 25v10" />
                        </Svg>
                      </PlainButton>
                      <PlainButton aria-label="Add vector mask">
                        <Svg $w={40} $h={38} viewBox="0 0 40 38" $c="#7c7c7b">
                          <rect x="2" y="2" width="36" height="34" rx="3" strokeWidth="4" />
                          <path d="M10 30q0-14 14-18M10 11h5M27 11h5M22 28h10M27 23v10" />
                        </Svg>
                      </PlainButton>
                    </MaskTools>
                  </MaskHead>
                  <MaskField>
                    <label htmlFor="density">Density:</label>
                    <MaskInput id="density" disabled />
                    <MaskRange type="range" aria-label="Density" disabled />
                  </MaskField>
                  <MaskField>
                    <label htmlFor="feather">Feather:</label>
                    <MaskInput id="feather" disabled />
                    <MaskRange type="range" aria-label="Feather" disabled />
                  </MaskField>
                  <RefineRow>
                    <span>Refine:</span>
                    <RefineButtons>
                      <Pill disabled>Mask Edge...</Pill>
                      <Pill disabled>Color Range...</Pill>
                      <Pill disabled>Invert</Pill>
                    </RefineButtons>
                  </RefineRow>
                  <PanelFooter $gap={30} $right={16}>
                    <PlainButton aria-label="Load selection">
                      <Svg $w={26} viewBox="0 0 26 26" $c="#bbb"><circle cx="13" cy="13" r="10" strokeDasharray="4 4" strokeWidth="2" /></Svg>
                    </PlainButton>
                    <PlainButton aria-label="Apply mask">
                      <Svg $w={34} $h={26} viewBox="0 0 34 26" $c="#9a9a99">
                        <path d="M2 13Q17-6 32 13 17 30 2 13z" fill="#eee" />
                        <path d="M13 6l4 6 4-6M17 12v6" stroke="#777" />
                      </Svg>
                    </PlainButton>
                    <PlainButton aria-label="Toggle mask">
                      <Svg $w={26} $h={22} viewBox="0 0 26 22">
                        <Fill d="M1 4q6 4 12 0 6 4 12 0-1 9-12 16Q2 13 1 4z" c="#774f60" />
                        <circle cx="13" cy="11" r="3" fill="#b33" stroke="none" />
                      </Svg>
                    </PlainButton>
                    <Spacer />
                    <PlainButton aria-label="Delete mask"><Trash faded /></PlainButton>
                  </PanelFooter>
                </MaskBody>
              </Panel>

              <Panel $grow>
                <TabStrip names={["LAYERS", "CHANNELS", "PATHS"]} active="CHANNELS" />
                <ChannelArea>
                  <ChannelList>
                    {channels.map(([name, key]) => {
                      const on = name === "test";
                      return (
                        <ChannelRow key={name}>
                          <EyeCell>
                            <EyeBox type="checkbox" aria-label={`Show ${name}`} defaultChecked={on} />
                            {on && (
                              <EyeIcon viewBox="0 0 28 24" aria-hidden="true">
                                <path d="M1 9q13-10 26 0-5 13-13 14Q6 22 1 9z" fill="#222" />
                                <circle cx="11" cy="9" r="2" fill="#aaa" />
                              </EyeIcon>
                            )}
                          </EyeCell>
                          <ChannelThumb viewBox="0 0 64 50" $dark={on} aria-hidden="true">
                            {on && <circle cx="9" cy="10" r="7" fill="#fff" />}
                          </ChannelThumb>
                          <ChannelName $on={on}>
                            <span>{name}</span>
                            <span>{key}</span>
                          </ChannelName>
                        </ChannelRow>
                      );
                    })}
                  </ChannelList>
                  <ChannelScroll />
                </ChannelArea>
                <ChannelFooter $gap={34} $right={46}>
                  <PlainButton aria-label="Load channel as selection">
                    <Svg $w={26} viewBox="0 0 26 26" $c="#999"><circle cx="13" cy="13" r="9" strokeDasharray="5 3" /></Svg>
                  </PlainButton>
                  <PlainButton aria-label="Save selection as channel">
                    <Svg $w={30} $h={26} viewBox="0 0 30 26" $c="#888">
                      <rect x="2" y="2" width="26" height="22" fill="#999" />
                      <circle cx="15" cy="13" r="6" fill="#fff" stroke="none" />
                    </Svg>
                  </PlainButton>
                  <PlainButton aria-label="New channel">
                    <Svg $w={28} $h={26} viewBox="0 0 28 26" $c="#666">
                      <path d="M11 3h14v20H4V11z" fill="#eee" />
                      <path d="M4 11h8V3M14 20h10V12" strokeWidth="4" />
                    </Svg>
                  </PlainButton>
                  <PlainButton aria-label="Delete channel"><Trash /></PlainButton>
                </ChannelFooter>
              </Panel>
            </Panels>
          </Work>
        </AppWindow>
      </Screen>
    </>
  );
}
